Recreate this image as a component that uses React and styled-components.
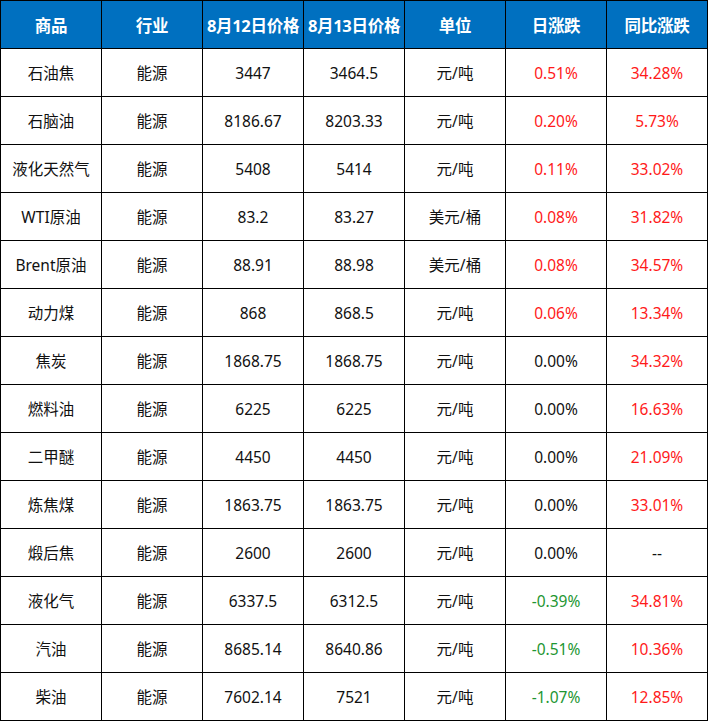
import React from "react"
import styled, { createGlobalStyle } from "styled-components"

const GlobalStyle = createGlobalStyle`
  html, body {
    margin: 0;
    padding: 0;
    background: #ffffff;
  }
  body {
    font-family: "Noto Sans", "Noto Sans CJK SC", sans-serif;
  }
`

const Grid = styled.div`
  display: grid;
  grid-template-columns: repeat(7, 100px);
  grid-auto-rows: 47px;
  gap: 1px;
  padding: 1px;
  width: 708px;
  box-sizing: border-box;
  background: #000000;
`

const HeadCell = styled.div`
  background: #0070c0;
  color: #ffffff;
  font-weight: 700;
  font-size: 16.5px;
  display: flex;
  align-items: center;
  justify-content: center;
  white-space: nowrap;
  letter-spacing: -0.3px;
`

const Cell = styled.div`
  background: #ffffff;
  color: ${(p) => (p.$tone === "up" ? "#ff1a1a" : p.$tone === "down" ? "#1e9632" : "#111111")};
  font-size: 15.5px;
  display: flex;
  align-items: center;
  justify-content: center;
  white-space: nowrap;
`

const heads = ["商品", "行业", "8月12日价格", "8月13日价格", "单位", "日涨跌", "同比涨跌"]

const rows = [
  ["石油焦", "能源", "3447", "3464.5", "元/吨", "0.51%", "34.28%"],
  ["石脑油", "能源", "8186.67", "8203.33", "元/吨", "0.20%", "5.73%"],
  ["液化天然气", "能源", "5408", "5414", "元/吨", "0.11%", "33.02%"],
  ["WTI原油", "能源", "83.2", "83.27", "美元/桶", "0.08%", "31.82%"],
  ["Brent原油", "能源", "88.91", "88.98", "美元/桶", "0.08%", "34.57%"],
  ["动力煤", "能源", "868", "868.5", "元/吨", "0.06%", "13.34%"],
  ["焦炭", "能源", "1868.75", "1868.75", "元/吨", "0.00%", "34.32%"],
  ["燃料油", "能源", "6225", "6225", "元/吨", "0.00%", "16.63%"],
  ["二甲醚", "能源", "4450", "4450", "元/吨", "0.00%", "21.09%"],
  ["炼焦煤", "能源", "1863.75", "1863.75", "元/吨", "0.00%", "33.01%"],
  ["煅后焦", "能源", "2600", "2600", "元/吨", "0.00%", "--"],
  ["液化气", "能源", "6337.5", "6312.5", "元/吨", "-0.39%", "34.81%"],
  ["汽油", "能源", "8685.14", "8640.86", "元/吨", "-0.51%", "10.36%"],
  ["柴油", "能源", "7602.14", "7521", "元/吨", "-1.07%", "12.85%"],
]

const toneOf = (v) => {
  if (v === "--" || v === "0.00%") return undefined
  return v.startsWith("-") ? "down" : "up"
}

export default function App() {
  return (
    <>
      <GlobalStyle />
      <Grid>
        {heads.map((h) => (
          <HeadCell key={h}>{h}</HeadCell>
        ))}
        {rows.map((r) =>
          r.map((v, i) => (
            <Cell key={r[0] + i} $tone={i >= 5 ? toneOf(v) : undefined}>
              {v}
            </Cell>
          ))
        )}
      </Grid>
    </>
  )
}
